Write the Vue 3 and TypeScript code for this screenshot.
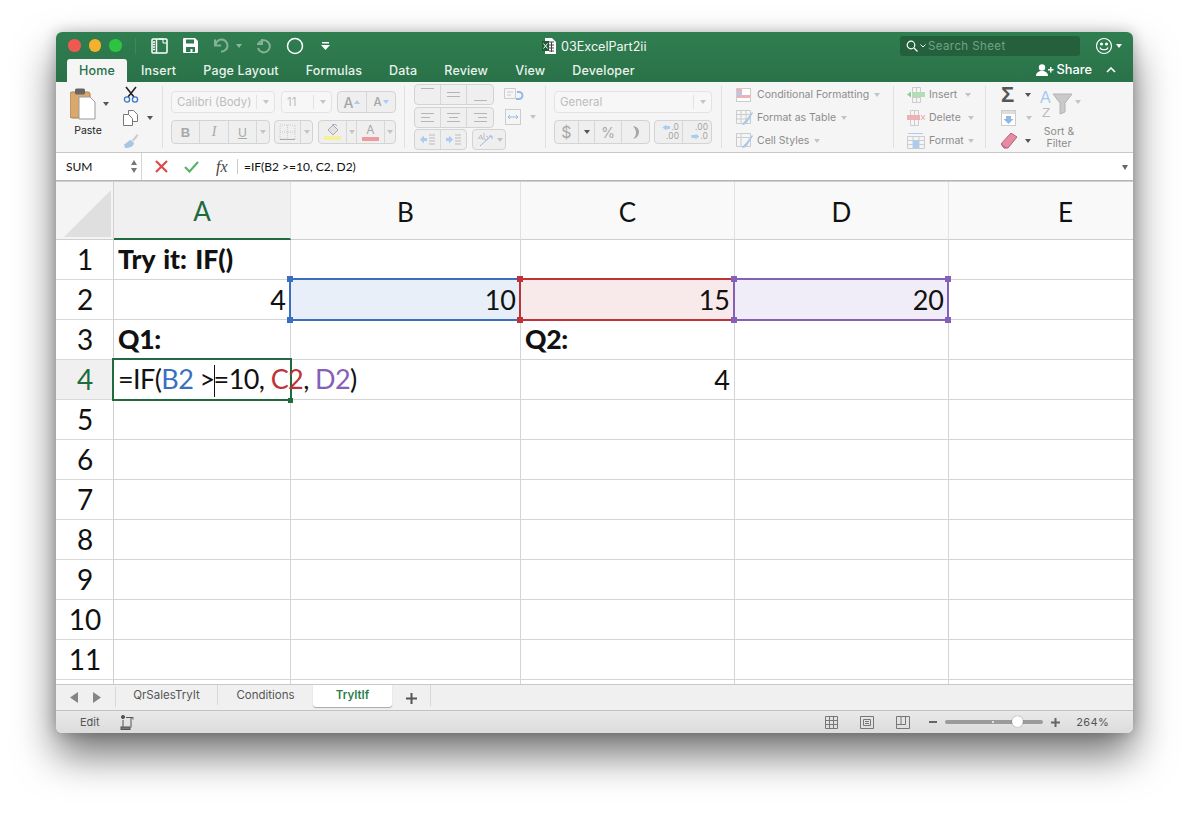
<script setup lang="ts">
const tabs = ['Insert', 'Page Layout', 'Formulas', 'Data', 'Review', 'View', 'Developer']
const cols = ['A', 'B', 'C', 'D', 'E']
const rows = [1, 2, 3, 4, 5, 6, 7, 8, 9, 10, 11, 12]
const corners = ['tl', 'tr', 'bl', 'br']
const sheets = ['QrSalesTryIt', 'Conditions']
const rowLabel = (r: number) => (r < 12 ? String(r) : '')
</script>

<template>
  <div class="desk">
    <div class="win">
      <header class="top">
        <div class="titlebar">
          <div class="lights"><i class="l lr"></i><i class="l ly"></i><i class="l lg"></i></div>
          <span class="tsep"></span>
          <svg class="qa" style="margin-left:15px" width="17" height="16" viewBox="0 0 17 16" fill="none" stroke="#fff" stroke-width="1.5"><rect x="1" y="1" width="15" height="14" rx="1"/><path d="M5.5 1v14M2 4h2M2 6.5h2M2 9h2M2 11.5h2"/><path d="M8 1h4v4h4" stroke-width="1"/></svg>
          <svg class="qa" style="margin-left:15px" width="15" height="15" viewBox="0 0 15 15" fill="#fff"><path d="M1 0h11l3 3v11a1 1 0 0 1-1 1H1a1 1 0 0 1-1-1V1a1 1 0 0 1 1-1zm2 1.500v4h8v-4zM3 9v5h9V9z" fill-rule="evenodd"/><rect x="7.500" y="11" width="2" height="3"/></svg>
          <svg class="qa" style="margin-left:15px;opacity:.42" width="17" height="15" viewBox="0 0 17 15" fill="none" stroke="#fff" stroke-width="2"><path d="M2 1.500v6h6M2.500 7.500A6 6 0 1 1 8 13.500"/></svg>
          <i class="mini" style="margin-left:6px;opacity:.45;border-top-color:#fff"></i>
          <svg class="qa" style="margin-left:14px;opacity:.42" width="16" height="16" viewBox="0 0 16 16" fill="none" stroke="#fff" stroke-width="2"><path d="M6 1v5H1M2.500 5.500A6 6 0 1 1 2 10"/></svg>
          <svg class="qa" style="margin-left:14px" width="18" height="18" viewBox="0 0 18 18" fill="none" stroke="#fff" stroke-width="1.500"><circle cx="9" cy="9" r="7.500"/></svg>
          <svg class="qa" style="margin-left:17px" width="9" height="8" viewBox="0 0 9 8" fill="#fff"><rect x="1" y="0" width="7" height="1.500"/><path d="M0 3h9L4.500 8z"/></svg>
          <div class="doc">
            <svg width="14" height="16" viewBox="0 0 14 16"><path d="M3 0h7l4 4v12H3z" fill="#fff"/><path d="M7 4h5M7 7h5M7 10h5M7 13h5M9.500 4v10" stroke="#444" stroke-width="1"/><rect x="0" y="3" width="7" height="10" fill="#1d5c37"/><path d="M1.500 5.500l4 5M5.500 5.500l-4 5" stroke="#fff" stroke-width="1"/></svg>
            <span>03ExcelPart2ii</span>
          </div>
          <div class="search">
            <svg width="12" height="12" viewBox="0 0 12 12" fill="none" stroke="#fff" stroke-width="1.200"><circle cx="5" cy="5" r="3.800"/><path d="M8 8l3.500 3.500"/></svg>
            <svg width="6" height="4" viewBox="0 0 6 4" fill="none" stroke="#fff"><path d="M.5.500l2.500 2.500L5.500.500"/></svg>
            <span>Search Sheet</span>
          </div>
          <svg class="smile" width="18" height="18" viewBox="0 0 18 18" fill="none" stroke="#fff" stroke-width="1.200"><circle cx="9" cy="9" r="7.500"/><circle cx="6.500" cy="7" r=".9" fill="#fff"/><circle cx="11.500" cy="7" r=".9" fill="#fff"/><path d="M5 10.500c1 3 7 3 8 0"/></svg>
          <i class="mini" style="margin-left:3px;border-top-color:#fff"></i>
        </div>
        <nav class="tabbar">
          <span class="tab on">Home</span>
          <span v-for="t in tabs" :key="t" class="tab">{{ t }}</span>
          <div class="share">
            <svg width="18" height="12" viewBox="0 0 18 12" fill="#fff"><circle cx="6" cy="3.500" r="3.200"/><path d="M0 12c0-3.500 2.500-5 6-5s6 1.500 6 5z"/><path d="M12 5h2V3h1.500v2h2v1.500h-2v2H14v-2h-2z"/></svg>
            <span>Share</span>
            <svg class="chev" width="10" height="6" viewBox="0 0 10 6" fill="none" stroke="#fff" stroke-width="1.600"><path d="M1 5l4-4 4 4"/></svg>
          </div>
        </nav>
      </header>

      <section class="ribbon">
        <div class="g clip">
          <div class="paste">
            <svg width="26" height="32" viewBox="0 0 26 32"><rect x="0" y="4" width="20" height="26" rx="2" fill="#d9a86c" stroke="#a9814f"/><rect x="5" y="0.500" width="10" height="6" rx="1.500" fill="#666"/><path d="M9 9h11l5 5v17H9z" fill="#fff" stroke="#9a9a9a"/></svg>
            <i class="mini dk" style="margin:14px 0 0 7px"></i>
            <span>Paste</span>
          </div>
          <div class="clipcol">
            <svg width="16" height="17" viewBox="0 0 16 17" fill="none"><path d="M3 1l8 10M13 1L5 11" stroke="#222" stroke-width="1.600"/><circle cx="4" cy="13.500" r="2.600" stroke="#3a78c2" stroke-width="1.300"/><circle cx="12" cy="13.500" r="2.600" stroke="#3a78c2" stroke-width="1.300"/></svg>
            <div class="row-c"><svg width="15" height="16" viewBox="0 0 15 16" fill="#fff" stroke="#777"><path d="M5.500.500h5l4 4v7h-9z"/><path d="M.5 4.500h5l4 4v7h-9z"/></svg><i class="mini dk" style="margin-left:9px"></i></div>
            <svg width="16" height="16" viewBox="0 0 16 16"><path d="M9 7l5-6 1.500 1.500-5 6z" fill="#ccc"/><path d="M1 11c3 0 4-4 7-4l3 3c0 3-4 5-9 5z" fill="#a9c6e4"/></svg>
          </div>
        </div>
        <span class="sep"></span>
        <div class="g font">
          <div class="r1">
            <div class="sel" style="width:104px"><span>Calibri (Body)</span><em></em><i class="mini"></i></div>
            <div class="sel" style="width:51px;margin-left:6px"><span>11</span><em></em><i class="mini"></i></div>
            <div class="btns" style="margin-left:5px">
              <b class="bt" style="width:29px"><span class="bigA">A</span><i class="up"></i></b>
              <b class="bt" style="width:28px"><span class="bigA sm">A</span><i class="dn"></i></b>
            </div>
          </div>
          <div class="r2">
            <div class="btns">
              <b class="bt" style="width:28px"><span class="fb">B</span></b>
              <b class="bt" style="width:29px"><span class="fi">I</span></b>
              <b class="bt" style="width:28px"><span class="fu">U</span></b>
              <b class="bt" style="width:12px"><i class="mini"></i></b>
            </div>
            <div class="btns" style="margin-left:4px">
              <b class="bt" style="width:26px"><svg width="17" height="16" viewBox="0 0 17 16" fill="none" stroke="#ccc" stroke-dasharray="1 1"><path d="M1 1h15v14H1zM8.500 1v14M1 8h15"/><path d="M1 15.500h15" stroke="#aaa" stroke-dasharray="none"/></svg></b>
              <b class="bt" style="width:11px"><i class="mini"></i></b>
            </div>
            <div class="btns" style="margin-left:5px">
              <b class="bt col" style="width:28px"><svg width="14" height="11" viewBox="0 0 14 11"><path d="M2 6l5-5 5 5-5 5z" fill="#e2e2e2" stroke="#a8a8a8"/><path d="M6 1l3-1 2 2" stroke="#8fb3d9" fill="none"/></svg><u class="bar" style="background:#f6ef9d"></u></b>
              <b class="bt" style="width:10px"><i class="mini"></i></b>
              <b class="bt col" style="width:28px"><span class="fa">A</span><u class="bar" style="background:#ef9a9e"></u></b>
              <b class="bt" style="width:10px"><i class="mini"></i></b>
            </div>
          </div>
        </div>
        <span class="sep"></span>
        <div class="g align">
          <div class="ar">
            <div class="btns h21">
              <b class="bt" style="width:26px"><i class="ln t"><u></u></i></b>
              <b class="bt" style="width:26px"><i class="ln"><u></u><u></u></i></b>
              <b class="bt" style="width:26px"><i class="ln b"><u></u></i></b>
            </div>
            <svg class="wrap" style="margin-left:10px" width="20" height="14" viewBox="0 0 20 14" fill="none"><path d="M.5.500h11v10H.5z" stroke="#ccc"/><path d="M3 4h6M3 7h4" stroke="#ccc"/><path d="M12 11h3a3 3 0 0 0 0-7h-2" stroke="#90bbe8" stroke-width="2"/></svg>
          </div>
          <div class="ar">
            <div class="btns h21">
              <b class="bt" style="width:26px"><i class="tl lf"><u></u><u></u><u></u></i></b>
              <b class="bt" style="width:26px"><i class="tl ce"><u></u><u></u><u></u></i></b>
              <b class="bt" style="width:26px"><i class="tl rg"><u></u><u></u><u></u></i></b>
            </div>
            <svg class="wrap" width="16" height="16" style="margin-left:11px" viewBox="0 0 16 16" fill="none"><rect x=".5" y=".5" width="15" height="15" stroke="#ccc"/><path d="M3 8h10M3 8l2-2M3 8l2 2M13 8l-2-2M13 8l-2 2" stroke="#8fbbe8"/></svg>
            <i class="mini" style="margin-left:9px"></i>
          </div>
          <div class="ar">
            <div class="btns h21">
              <b class="bt" style="width:26px"><svg width="15" height="11" viewBox="0 0 15 11"><path d="M0 5.500l4-4v2.500h3v3H4v2.500z" fill="#a9ccf0"/><path d="M9 1h6M9 4h6M9 7h6M9 10h6" stroke="#bbb"/></svg></b>
              <b class="bt" style="width:25px"><svg width="15" height="11" viewBox="0 0 15 11"><path d="M7 5.500l-4-4v2.500H0v3h3v2.500z" fill="#a9ccf0"/><path d="M9 1h6M9 4h6M9 7h6M9 10h6" stroke="#bbb"/></svg></b>
            </div>
            <div class="btns h21" style="margin-left:5px">
              <b class="bt" style="width:32px"><svg width="20" height="19" viewBox="0 0 20 19" fill="none"><path d="M4 16L15 6M13 6h3v3" stroke="#8fbbe8"/><path d="M2 9l3-4 2 5M3 8h3M8 3v5a2 2 0 1 0 2-2" stroke="#bbb" stroke-width=".9"/></svg><i class="mini" style="margin-left:1px"></i></b>
            </div>
          </div>
        </div>
        <span class="sep"></span>
        <div class="g num">
          <div class="sel" style="width:158px"><span>General</span><em></em><i class="mini"></i></div>
          <div class="r2">
            <div class="btns">
              <b class="bt" style="width:24px"><span class="cur">$</span></b>
              <b class="bt" style="width:16px"><i class="mini dk"></i></b>
              <b class="bt" style="width:27px"><span class="cur pc">%</span></b>
              <b class="bt" style="width:27px"><svg width="7" height="13" viewBox="0 0 7 13" fill="#a8a8a8"><path d="M1 0c4 .5 6 3 6 6 0 3-2 6-6 7 2-2 3-4 3-6S3 2 1 0z"/></svg></b>
            </div>
            <div class="btns" style="margin-left:4px">
              <b class="bt dec" style="width:28px"><span><em class="ar-l"></em>.0</span><span>.00</span></b>
              <b class="bt dec" style="width:28px"><span>.00</span><span><em class="ar-r"></em>.0</span></b>
            </div>
          </div>
        </div>
        <span class="sep"></span>
        <div class="g list sty">
          <div class="it">
            <svg width="15" height="14" viewBox="0 0 15 14"><rect x=".5" y=".5" width="14" height="13" fill="#fff" stroke="#ccc"/><rect x="1" y="4" width="5" height="3" fill="#a9ccf0"/><rect x="1" y="1" width="5" height="3" fill="#eeb1b5"/><rect x="1" y="7" width="13" height="3" fill="#eeb1b5"/></svg>
            <span>Conditional Formatting</span><i class="mini"></i>
          </div>
          <div class="it">
            <svg width="17" height="16" viewBox="0 0 17 16" fill="none"><path d="M.5.500h14v13H.5zM.5 4.500h14M.5 9h14M5 .5v13M10 .5v13" stroke="#ccc"/><path d="M6 15c1-3 3-4 4-5l6-8 1 1-5 8c-1 2-3 4-6 4z" fill="#a9c9ea"/></svg>
            <span style="margin-left:4px">Format as Table</span><i class="mini"></i>
          </div>
          <div class="it">
            <svg width="17" height="16" viewBox="0 0 17 16" fill="none"><path d="M.5.500h14v13H.5zM.5 4.500h14M5 .5v13" stroke="#ccc"/><path d="M6 15c1-3 3-4 4-5l6-8 1 1-5 8c-1 2-3 4-6 4z" fill="#a9c9ea"/></svg>
            <span style="margin-left:4px">Cell Styles</span><i class="mini"></i>
          </div>
        </div>
        <span class="sep"></span>
        <div class="g list cells">
          <div class="it">
            <svg width="18" height="16" viewBox="0 0 18 16" fill="none"><path d="M5.500.500h8v15h-8zM5.500 5.500h8M5.500 10.500h8M9.500.5v15" stroke="#ccc"/><rect x="5" y="5" width="13" height="5" fill="#b3dcb8"/><path d="M0 7.500l4-3v6z" fill="#8fcb98"/></svg>
            <span>Insert</span><i class="mini" style="margin-left:8px"></i>
          </div>
          <div class="it">
            <svg width="18" height="16" viewBox="0 0 18 16" fill="none"><path d="M3.500.500h8v15h-8zM7.500.5v15" stroke="#ccc"/><rect x="0" y="5" width="13" height="5" fill="#efb1b4"/><path d="M14 5l4 5M18 5l-4 5" stroke="#efb1b4" stroke-width="1.200"/></svg>
            <span>Delete</span><i class="mini" style="margin-left:7px"></i>
          </div>
          <div class="it">
            <svg width="18" height="17" viewBox="0 0 18 17" fill="none"><path d="M.5 4.500h17v12H.5zM6 4.500v12M12 4.500v12M.5 8.500h17M.5 12.500h17" stroke="#ccc"/><rect x="6" y="8" width="6" height="8" fill="#a9ccf0"/><path d="M1 1.500h15" stroke="#a9ccf0"/></svg>
            <span>Format</span><i class="mini" style="margin-left:4px"></i>
          </div>
        </div>
        <span class="sep"></span>
        <div class="g edit">
          <div class="edcol">
            <div class="row-c"><span class="sig">Σ</span><i class="mini dk" style="margin-left:9px"></i></div>
            <div class="row-c"><svg width="15" height="16" viewBox="0 0 15 16"><rect x=".5" y=".5" width="14" height="15" fill="#fff" stroke="#ccc"/><rect x="1" y="1" width="13" height="3" fill="#ddd"/><path d="M5 6h5v3h2.500l-5 5-5-5H5z" fill="#8fb8e6"/></svg><i class="mini" style="margin-left:10px"></i></div>
            <div class="row-c"><svg width="16" height="16" viewBox="0 0 16 16"><path d="M0 11L10 0l6 4L7 15H3z" fill="#e58ca2" stroke="#b0607a"/><path d="M0 11l5 4" stroke="#b0607a"/></svg><i class="mini dk" style="margin-left:8px"></i></div>
          </div>
          <div class="sort">
            <div class="sorti">
              <svg width="33" height="29" viewBox="0 0 33 29"><text x="0" y="13" font-size="16" fill="#a3c9f0" font-family="Liberation Sans">A</text><text x="2" y="27" font-size="13.500" fill="#bbb" font-family="Liberation Sans">Z</text><path d="M13 4h19l-7 9v9l-5 2V13z" fill="#c9c9c9" stroke="#b4b4b4"/></svg>
              <i class="mini"></i>
            </div>
            <span>Sort &amp;<br />Filter</span>
          </div>
        </div>
      </section>

      <section class="fbar">
        <div class="name"><span>SUM</span><div class="spin"><i class="su"></i><i class="sd"></i></div></div>
        <svg style="margin-left:13px" width="13" height="13" viewBox="0 0 13 13" fill="none" stroke="#dc4b4b" stroke-width="2.200"><path d="M1 1l11 11M12 1L1 12"/></svg>
        <svg style="margin-left:16px" width="15" height="12" viewBox="0 0 15 12" fill="none" stroke="#5db268" stroke-width="2.200"><path d="M1 6l4.500 4.500L14 1"/></svg>
        <span class="fx">fx</span>
        <span class="fsep"></span>
        <span class="ftext">=IF(B2 &gt;=10, C2, D2)</span>
        <i class="mini fa-d"></i>
      </section>

      <section class="sheet">
        <div class="grid">
          <div class="corner"><svg width="47" height="47" viewBox="0 0 47 47"><path d="M47 0v47H0z" fill="#dfdfdf"/></svg></div>
          <div v-for="c in cols" :key="c" class="ch" :class="{ act: c === 'A' }">{{ c }}</div>
          <template v-for="r in rows" :key="r">
            <div class="rh" :class="{ act: r === 4 }">{{ rowLabel(r) }}</div>
            <div v-for="c in cols" :key="c + r" class="cell" :class="[c === 'A' ? 'ca' : '', r === 2 && c !== 'A' && c !== 'E' ? 'sel-' + c : '']">
              <template v-if="c === 'A' && r === 1"><b class="wide">Try it: IF()</b></template>
              <template v-else-if="c === 'A' && r === 2"><span class="rt">4</span></template>
              <template v-else-if="c === 'A' && r === 3"><b>Q1:</b></template>
              <template v-else-if="c === 'A' && r === 4">
                <span class="edit-t">=IF(<span class="cb">B2</span> &gt;<i class="caret"></i>=10, <span class="cr">C2</span>, <span class="cp">D2</span>)</span>
                <i class="active"></i><i class="fill"></i>
              </template>
              <template v-else-if="c === 'C' && r === 3"><b>Q2:</b></template>
              <template v-else-if="c === 'C' && r === 4"><span class="rt">4</span></template>
              <template v-else-if="r === 2 && c !== 'E'">
                <span class="rt">{{ c === 'B' ? 10 : c === 'C' ? 15 : 20 }}</span>
                <i class="frame"></i>
                <i v-for="k in corners" :key="k" class="hd" :class="k"></i>
              </template>
            </div>
          </template>
        </div>
      </section>

      <section class="sheets">
        <div class="nav">
          <svg width="8" height="11" viewBox="0 0 8 11" fill="#858585"><path d="M8 0v11L0 5.500z"/></svg>
          <svg width="8" height="11" viewBox="0 0 8 11" fill="#858585"><path d="M0 0v11l8-5.500z"/></svg>
        </div>
        <span v-for="s in sheets" :key="s" class="st" :class="'st-' + s">{{ s }}</span>
        <span class="st cur-t">TryItIf</span>
        <svg class="plus" width="11" height="11" viewBox="0 0 11 11" fill="#555"><path d="M4.500 0h2v4.500H11v2H6.500V11h-2V6.500H0v-2h4.500z"/></svg>
        <span class="lastsep"></span>
      </section>

      <footer class="status">
        <span class="ed">Edit</span>
        <svg width="15" height="15" viewBox="0 0 15 15" fill="none" stroke="#555"><circle cx="3" cy="2" r="1.600" fill="#555"/><path d="M6 2.500h7v2M11 2.500v10M3 5v7"/><rect x="1" y="12" width="9" height="2.500" fill="#777"/></svg>
        <div class="st-r">
          <svg width="13" height="13" viewBox="0 0 13 13" fill="none" stroke="#777"><path d="M.5.500h12v12H.5zM4.500.5v12M8.500.5v12M.5 4.500h12M.5 8.500h12"/></svg>
          <svg style="margin-left:22px" width="14" height="13" viewBox="0 0 14 13" fill="none" stroke="#777"><path d="M.5.500h13v12H.5zM3.500 3.500h7v6h-7zM5 5.500h4M5 7.500h4"/></svg>
          <svg style="margin-left:22px" width="14" height="13" viewBox="0 0 14 13" fill="none" stroke="#777"><path d="M.5.500h13v12H.5zM.5 8.500h9M5 .5v8M9.500.5v8"/></svg>
          <i class="minus"></i>
          <div class="slider"><i class="tick"></i><i class="thumb"></i></div>
          <svg style="margin-left:8px" width="9" height="9" viewBox="0 0 9 9" fill="#666"><path d="M3.500 0h2v3.500H9v2H5.500V9h-2V5.500H0v-2h3.500z"/></svg>
          <span class="pct">264%</span>
        </div>
      </footer>
    </div>
  </div>
</template>

<style>
html, body { margin: 0; background: #fff; }
</style>

<style scoped>
.desk { height: 813px; box-sizing: border-box; padding: 32px 56px 0; overflow: hidden; background: #fff; font-family: Inter, "Liberation Sans", sans-serif; }
.win { width: 1077px; height: 701px; border-radius: 6px; display: flex; flex-direction: column; box-shadow: 0 22px 40px rgba(0,0,0,.55), 0 0 14px rgba(0,0,0,.22); background: #fff; position: relative; }
.top { height: 50px; background: linear-gradient(#2f7e50, #2a7249); border-radius: 6px 6px 0 0; color: #fff; flex: none; }
.titlebar { height: 27px; display: flex; align-items: center; padding-left: 12px; position: relative; }
.lights { display: flex; gap: 8px; }
.l { width: 12.500px; height: 12.500px; border-radius: 50%; display: block; }
.lr { background: #ee5a52; } .ly { background: #f5b02e; } .lg { background: #2fc440; }
.tsep { width: 1px; height: 16px; background: #3b8a5d; margin-left: 13px; }
.qa { flex: none; }
.mini { display: inline-block; flex: none; width: 0; height: 0; border: 3px solid transparent; border-top: 4px solid #c4c4c4; border-bottom: 0; }
.mini.dk { border-top-color: #555; }
.doc { position: absolute; left: 486px; top: 6px; display: flex; align-items: center; gap: 5px; font-size: 12.600px; color: #f4f8f5; }
.search { margin-left: auto; width: 180px; height: 20px; box-sizing: border-box; background: #25603d; border-radius: 3px; display: flex; align-items: center; padding-left: 6px; gap: 2px; font-size: 11.500px; color: #70a386; }
.search span { margin-left: 0; letter-spacing: .4px; }
.smile { margin-left: 15px; }
.titlebar > .mini:last-child { margin-right: 11px; }
.tabbar { height: 23px; display: flex; align-items: flex-end; padding-left: 11px; position: relative; }
.tab { font-size: 12.500px; line-height: 23px; margin-right: 27px; color: #e9f2ec; font-weight: 500; white-space: nowrap; letter-spacing: .16px; }
.tab.on { background: #f5f5f5; color: #277148; width: 60px; text-align: center; border-radius: 3px 3px 0 0; margin-right: 14px; }
.share { position: absolute; right: 17px; top: 0; height: 21px; display: flex; align-items: center; font-size: 12.800px; font-weight: 500; }
.share span { margin-left: 3px; }
.chev { margin-left: 14px; }

.ribbon { height: 70px; flex: none; display: flex; background: #f5f5f5; border-bottom: 1px solid #c9c9c9; box-sizing: content-box; }
.sep { width: 1px; background: #e0e0e0; margin: 4px 0; flex: none; }
.g { flex: none; box-sizing: border-box; height: 70px; }
.clip { width: 106px; position: relative; display: flex; padding-left: 14px; }
.paste { width: 53px; height: 60px; display: flex; flex-wrap: wrap; align-items: flex-start; align-content: flex-start; padding-top: 6px; font-size: 10.500px; color: #222; }
.paste svg { flex: none; }
.paste span { width: 36px; text-align: center; margin-top: 4px; }
.clipcol { display: flex; flex-direction: column; align-items: flex-start; gap: 7px; padding-top: 4px; }
.row-c { display: flex; align-items: center; }
.font { width: 241px; padding: 9px 0 0 8px; }
.r1, .r2 { display: flex; }
.r2 { margin-top: 7px; height: 24px; }
.sel { height: 22px; box-sizing: border-box; border: 1px solid #e3e3e3; border-radius: 4px; background: #f7f7f7; display: flex; align-items: center; padding: 0 5px; font-size: 11.500px; color: #bdbdbd; }
.sel span { flex: 1; }
.sel em { width: 1px; height: 14px; background: #e3e3e3; margin-right: 6px; }
.btns { display: inline-flex; border: 1px solid #d3d3d3; border-radius: 4px; overflow: hidden; background: #efefef; height: 100%; box-sizing: border-box; }
.r1 .btns { height: 22px; }
.bt { display: flex; align-items: center; justify-content: center; border-right: 1px solid #d7d7d7; box-sizing: border-box; font-weight: 400; flex: none; height: 100%; }
.bt:last-child { border-right: 0; }
.bigA { font-size: 14px; color: #a5a5a5; font-weight: 500; }
.bigA.sm { font-size: 11.500px; }
.up, .dn { width: 0; height: 0; border: 3px solid transparent; margin-left: 1px; }
.up { border-bottom: 4px solid #a9ccf0; border-top: 0; }
.dn { border-top: 4px solid #a9ccf0; border-bottom: 0; }
.fb { font-weight: 700; font-size: 13px; color: #a8a8a8; font-family: "Liberation Sans", sans-serif; }
.fi { font-style: italic; font-size: 14px; color: #a8a8a8; font-family: "Liberation Serif", serif; }
.fu { text-decoration: underline; font-size: 12px; color: #a8a8a8; }
.col { flex-direction: column; gap: 1px; }
.bar { width: 17px; height: 4px; display: block; }
.fa { font-size: 12px; line-height: 12px; color: #a8a8a8; }
.align { width: 140px; padding: 2px 0 0 9px; display: flex; flex-direction: column; gap: 1.500px; }
.ar { display: flex; align-items: center; height: 21px; }
.h21 { height: 21px; flex: none; }
.wrap { margin-left: 9px; }
.ln { display: flex; flex-direction: column; gap: 3px; width: 13px; height: 13px; justify-content: center; }
.ln.t { justify-content: flex-start; } .ln.b { justify-content: flex-end; }
.ln u { display: block; height: 1px; background: #b5b5b5; }
.tl { display: flex; flex-direction: column; gap: 3px; width: 13px; }
.tl u { display: block; height: 1px; background: #b5b5b5; }
.tl.lf u:nth-child(2) { width: 9px; }
.tl.ce u:nth-child(2) { width: 9px; margin: 0 2px; }
.tl.rg u:nth-child(2) { width: 9px; margin-left: 4px; }
.num { width: 175px; padding: 9px 0 0 8px; }
.cur { font-size: 16px; color: #a8a8a8; }
.pc { font-size: 14px; }
.dec { flex-direction: column; font-size: 8.500px; line-height: 9px; color: #a5a5a5; align-items: flex-end; padding-right: 3px; }
.dec span { display: flex; align-items: center; }
.ar-l, .ar-r { display: inline-block; width: 8px; height: 6px; background: #a9ccf0; margin-right: 1px; }
.ar-l { clip-path: polygon(0 50%, 50% 0, 50% 25%, 100% 25%, 100% 75%, 50% 75%, 50% 100%); }
.ar-r { clip-path: polygon(100% 50%, 50% 0, 50% 25%, 0 25%, 0 75%, 50% 75%, 50% 100%); }
.list { padding-top: 1px; font-size: 10.500px; color: #8c8c8c; }
.it { height: 23px; display: flex; align-items: center; white-space: nowrap; }
.it .mini { margin-left: 5px; }
.it span { margin-left: 6px; }
.sty { width: 171px; padding-left: 14px; }
.cells { width: 91px; padding-left: 13px; }
.cells .it span { margin-left: 4px; }
.edit { flex: 1; display: flex; padding-left: 15px; }
.edcol { width: 39px; padding-top: 1px; }
.edcol .row-c { height: 23px; }
.sig { font-size: 22px; color: #555; line-height: 20px; width: 15px; font-family: "Liberation Sans", sans-serif; font-weight: 700; }
.sort { display: flex; flex-direction: column; align-items: flex-start; padding-top: 8px; font-size: 10.500px; color: #8c8c8c; }
.sorti { display: flex; align-items: flex-start; height: 29px; }
.sorti .mini { margin: 10px 0 0 2px; }
.sort span { display: block; text-align: center; width: 38px; line-height: 12px; margin-top: 7px; }

.fbar { height: 27px; flex: none; display: flex; align-items: center; background: #fff; border-bottom: 1px solid #b5b5b5; position: relative; font-family: Lato, sans-serif; }
.name { width: 86px; height: 100%; box-sizing: border-box; border-right: 1px solid #d5d5d5; display: flex; align-items: center; padding-left: 10px; font-size: 12px; color: #111; }
.name span { flex: 1; }
.spin { display: flex; flex-direction: column; gap: 3px; margin-right: 4px; }
.su, .sd { width: 0; height: 0; border: 3px solid transparent; display: block; }
.su { border-bottom: 5px solid #777; border-top: 0; }
.sd { border-top: 5px solid #777; border-bottom: 0; }
.fx { margin-left: 17px; font: italic 16px "Liberation Serif", serif; color: #444; width: 16px; }
.fsep { width: 1px; height: 15px; background: #ccc; margin-left: 5px; }
.ftext { margin-left: 6px; font-size: 12px; color: #111; }
.fa-d { position: absolute; right: 5px; top: 12px; border-top-color: #666; border-width: 3.500px; border-top-width: 5px; border-bottom: 0; }

.sheet { flex: 1; min-height: 0; overflow: hidden; border-top: 1px solid #cfcfcf; font-family: Lato, sans-serif; background: #fff; }
.grid { display: grid; grid-template-columns: 58px 177px 230px 214px 214px 234px; grid-template-rows: 58px repeat(12, 40px); }
.corner { background: #f4f4f4; border-right: 1px solid #cfcfcf; border-bottom: 1px solid #cfcfcf; box-sizing: border-box; display: flex; align-items: flex-end; justify-content: flex-end; padding: 0 2px 2px 0; }
.ch { background: #f9f9f9; border-right: 1px solid #e2e2e2; border-bottom: 1px solid #cfcfcf; box-sizing: border-box; display: flex; align-items: center; justify-content: center; font-size: 26px; color: #111; padding-top: 2px; }
.ch.act { background: #f0f0f0; color: #1f6b3f; border-bottom: 2px solid #1f6b3f; }
.rh { background: #fff; border-right: 1px solid #cfcfcf; border-bottom: 1px solid #d9d9d9; box-sizing: border-box; display: flex; align-items: center; justify-content: center; font-size: 28px; color: #111; padding: 0 0 2px 1px; }
.rh.act { background: #f0f0f0; color: #1f6b3f; }
.cell { position: relative; border-right: 1px solid #d4d4d4; border-bottom: 1px solid #d4d4d4; box-sizing: border-box; display: flex; align-items: center; padding: 0 4px; font-size: 27px; color: #111; white-space: nowrap; }
.cell b { font-weight: 900; font-size: 26.500px; letter-spacing: -.3px; padding-bottom: 1px; }
.cell b.wide { word-spacing: 2px; letter-spacing: 0; }
.rt { margin-left: auto; }
.sel-B { background: #e8eff9; --c: #3a6fc0; }
.sel-C { background: #f8eaea; --c: #bf3237; }
.sel-D { background: #f0edf8; --c: #8460b8; }
.frame { position: absolute; left: -2px; top: -2px; right: -1px; bottom: -2px; border: 2px solid var(--c); z-index: 2; }
.hd { position: absolute; width: 6px; height: 6px; background: var(--c); z-index: 3; }
.hd.tl { left: -4px; top: -4px; } .hd.tr { right: -3px; top: -4px; }
.hd.bl { left: -4px; bottom: -4px; } .hd.br { right: -3px; bottom: -4px; }
.edit-t { position: relative; z-index: 4; letter-spacing: -.6px; top: 1px; }
.cb { color: #3a6fc0; } .cr { color: #bf3237; } .cp { color: #8460b8; }
.caret { display: inline-block; width: 1px; height: 32px; background: #111; vertical-align: middle; margin: 0 -1px 0 -1px; position: relative; top: -2px; }
.active { position: absolute; left: -2px; top: -2px; right: -2px; bottom: -2px; border: 2px solid #1f6b3f; z-index: 3; }
.fill { position: absolute; right: -3px; bottom: -4px; width: 5px; height: 5px; background: #1f6b3f; z-index: 4; }

.sheets { height: 25px; flex: none; background: #f0f0f0; border-top: 1px solid #c9c9c9; display: flex; align-items: flex-start; font-size: 11.500px; color: #555; box-sizing: content-box; }
.nav { width: 60px; height: 20px; box-sizing: border-box; display: flex; align-items: center; gap: 15px; padding-left: 14px; border-right: 1px solid #d8d8d8; margin-top: 2px; }
.st { height: 20px; display: flex; align-items: center; justify-content: center; box-sizing: border-box; border-right: 1px solid #d8d8d8; }
.st-QrSalesTryIt { width: 102px; }
.st-Conditions { width: 95px; border-right: 0; }
.cur-t { width: 79px; height: 22px; padding-bottom: 2px; background: #fff; color: #2a7e4c; font-weight: 600; border: 0; border-radius: 0 0 3px 3px; box-shadow: 0 1px 1px rgba(0,0,0,.3); }
.plus { margin: 8px 0 0 14px; }
.lastsep { width: 1px; height: 21px; background: #d8d8d8; margin-left: 13px; }
.status { height: 22px; flex: none; background: linear-gradient(#e9e9e9, #dcdcdc); border-top: 1px solid #c2c2c2; display: flex; align-items: center; font-size: 11px; color: #555; border-radius: 0 0 6px 6px; position: relative; }
.ed { margin: 0 20px 0 24px; }
.st-r { margin-left: auto; display: flex; align-items: center; padding-right: 24px; }
.minus { width: 8px; height: 2px; background: #666; margin-left: 19px; display: block; }
.slider { width: 98px; height: 4px; border-radius: 2px; background: #9b9b9b; margin-left: 8px; position: relative; }
.tick { position: absolute; left: 47px; top: 1px; width: 2px; height: 2px; background: #ddd; }
.thumb { position: absolute; left: 66.500px; top: -4px; width: 11px; height: 11px; border-radius: 50%; background: #fff; box-shadow: 0 0 1px rgba(0,0,0,.6); }
.pct { margin-left: 16px; letter-spacing: .3px; }
</style>
